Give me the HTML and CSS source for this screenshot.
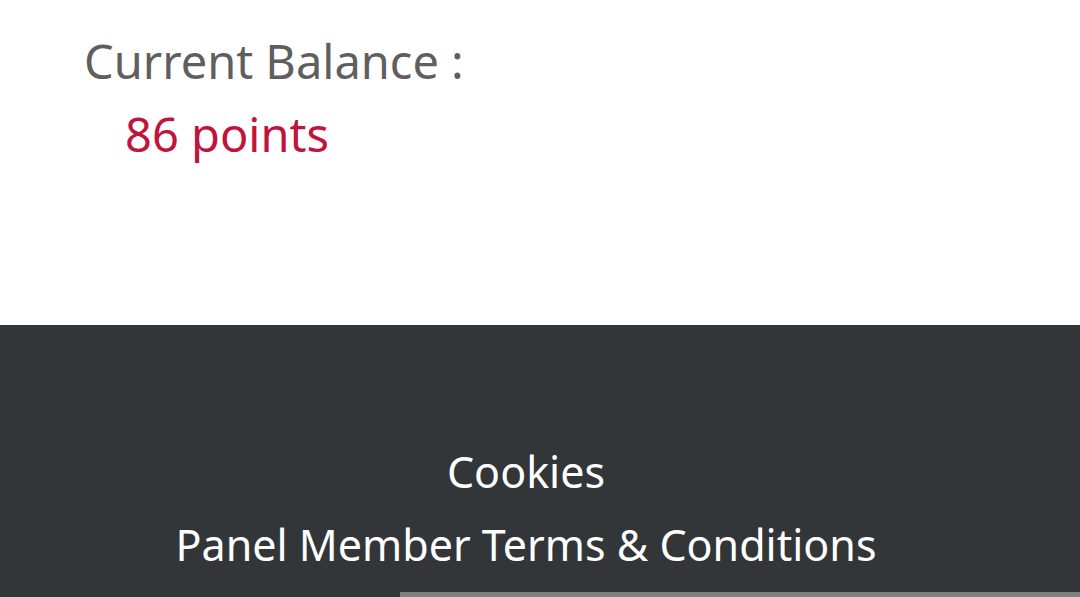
FILE: index.html
```html
<!DOCTYPE html>
<html>
<head>
<meta charset="utf-8">
<link rel="stylesheet" href="styles.css">
</head>
<body>
<main class="balance">
  <div class="balance-label">Current Balance :</div>
  <div class="balance-value">86 points</div>
</main>
<footer class="footer">
  <nav class="footer-links">
    <a class="footer-link" href="#">Cookies</a>
    <a class="footer-link" href="#">Panel Member Terms &amp; Conditions</a>
  </nav>
  <div class="footer-bar"></div>
</footer>
</body>
</html>
```
FILE: styles.css
```css
html, body {
  margin: 0;
  padding: 0;
  background: #ffffff;
  font-family: "Noto Sans", "Open Sans", sans-serif;
  overflow: hidden;
}
.balance {
  height: 325px;
  box-sizing: border-box;
  padding: 28px 0 0 84px;
}
.balance-label {
  font-size: 47px;
  line-height: 66px;
  color: #5f5f5f;
}
.balance-value {
  font-size: 47px;
  line-height: 66px;
  color: #c0143c;
  padding-left: 41px;
  margin-top: 7px;
}
.footer {
  background: #333639;
  height: 272px;
  display: flex;
  flex-direction: column;
}
.footer-links {
  display: flex;
  flex-direction: column;
  align-items: center;
  padding: 110px 28px 0 0;
  flex: 1;
}
.footer-link {
  color: #ffffff;
  text-decoration: none;
  font-size: 43px;
  line-height: 73px;
}
.footer-bar {
  margin-left: 400px;
  height: 5px;
  background: #808080;
}
```
